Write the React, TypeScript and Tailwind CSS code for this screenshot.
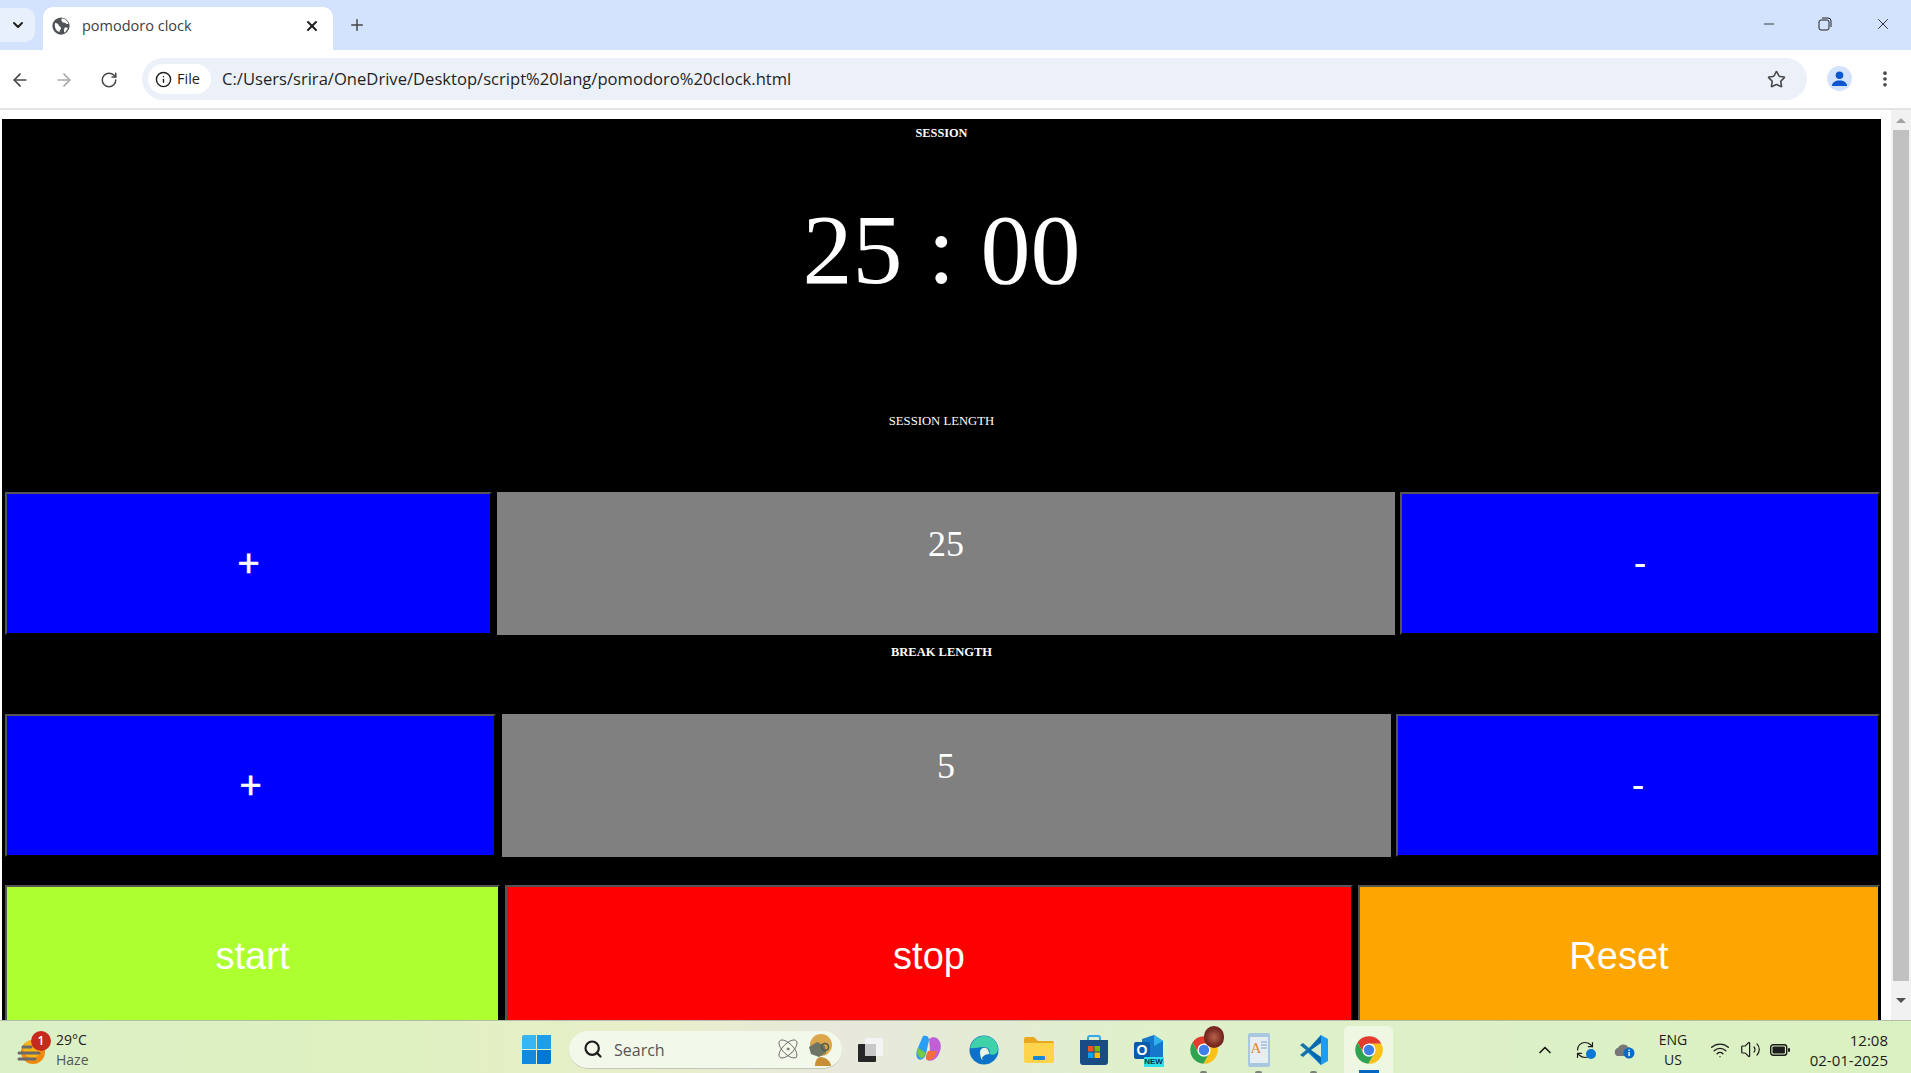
import React from "react";
import { ArrowLeft, ArrowRight, RotateCw, Star, Search, Atom, Info, Plus, X, ChevronDown, ChevronUp, Minus, RefreshCw, Wifi, Volume2, EllipsisVertical } from "lucide-react";

const SERIF = "font-['Liberation_Serif',serif]";
const SANS = "font-['Liberation_Sans',sans-serif]";
const UI = "font-['Open_Sans','Noto_Sans',sans-serif]";

const btnBorder = "border-2 border-solid border-t-[#555] border-l-[#555] border-r-black border-b-black";

function Cell({ w, bg, label, extra = "" }: { w: string; bg: string; label: string; extra?: string }) {
  return (
    <button className={`${w} ${bg} text-[38px] ${extra} ${btnBorder} h-[143px] shrink-0 text-white ${SANS} flex items-center justify-center`}>
      {label}
    </button>
  );
}

function Value({ w, v }: { w: string; v: string }) {
  return (
    <div className={`${w} h-[143px] shrink-0 bg-[#808080] text-white text-center text-[36px] leading-[41px] pt-[32px] ${SERIF}`}>{v}</div>
  );
}

function Chrome({ s = 28 }: { s?: number }) {
  return (
    <svg width={s} height={s} viewBox="0 0 48 48">
      <path d="M5.54 12.03A22 22 0 0 1 43.6 14H24A10 10 0 0 0 15.34 29Z" fill="#e33b2e" />
      <path d="M43.6 14A22 22 0 0 1 22.86 45.97L32.66 29A10 10 0 0 0 24 14Z" fill="#fbc116" />
      <path d="M22.86 45.97A22 22 0 0 1 5.54 12.03L15.34 29A10 10 0 0 0 32.66 29Z" fill="#2fa34f" />
      <circle cx="24" cy="24" r="10.5" fill="#fff" />
      <circle cx="24" cy="24" r="8.3" fill="#3f7fe8" />
    </svg>
  );
}

function Slot({ children, dot, active }: { children: React.ReactNode; dot?: boolean; active?: boolean }) {
  return (
    <div className="relative w-[55px] h-[47px] shrink-0 flex items-center justify-center">
      {active && <div className="absolute left-[3px] top-0 bottom-0 w-[49px] rounded-t-[5px] bg-[#eef7e2]" />}
      <div className="relative flex items-center justify-center">{children}</div>
      {dot && <div className="absolute left-[24px] bottom-0 w-[7px] h-[2px] rounded-t bg-[#7c8276]" />}
      {active && <div className="absolute left-[18px] bottom-0 w-[20px] h-[3px] bg-[#0067c0]" />}
    </div>
  );
}

export default function App() {
  return (
    <div className={`w-[1911px] h-[1073px] overflow-hidden flex flex-col bg-white ${UI}`}>
      {/* tab strip */}
      <div className="h-[50px] shrink-0 bg-[#d3e3fd] flex items-end">
        <div className="w-[35px] h-[34px] mb-[8px] rounded-r-[10px] bg-[#e9f0fd] flex items-center justify-center">
          <ChevronDown size={16} strokeWidth={3} className="text-[#1f1f1f]" />
        </div>
        <div className="ml-[8px] w-[290px] h-[43px] bg-white rounded-t-[10px] flex items-center pl-[9px] pb-[5px]">
          <svg width="18" height="18" viewBox="0 0 24 24">
            <circle cx="12" cy="12" r="11.5" fill="#4f5357" />
            <path d="M4 8c3 0 4 1 5 3s3 2 3 4-2 2-2 5c-4-1-7-5-6-12zM13 2c4 0 8 3 9 7-2 1-3 0-4-1s-3 0-4-1-2-3-1-5zM17 14c2 0 4 0 4 1-1 3-3 5-5 6 0-2 0-6 1-7z" fill="#fff" />
          </svg>
          <span className="ml-[12px] w-[114px] text-[14.5px] text-[#3c4043] whitespace-nowrap">pomodoro clock</span>
          <X size={16} strokeWidth={3} className="ml-[108px] text-[#1f1f1f]" />
        </div>
        <Plus size={18} strokeWidth={2} className="ml-[15px] mb-[16px] text-[#444746]" />
        <div className="flex-1" />
        <div className="flex items-center h-[50px] pb-[2px]">
          <Minus size={16} strokeWidth={1.3} className="text-[#1f1f1f]" />
          <svg width="14" height="14" viewBox="0 0 14 14" fill="none" stroke="#1f1f1f" strokeWidth="1" className="ml-[41px]">
            <rect x="1" y="3" width="10" height="10" rx="2" />
            <path d="M4 1h6a3 3 0 0 1 3 3v6" />
          </svg>
          <X size={18} strokeWidth={1.2} className="ml-[42px] mr-[19px] text-[#1f1f1f]" />
        </div>
      </div>

      {/* toolbar */}
      <div className="h-[60px] shrink-0 bg-white border-b-2 border-[#e3e3e3] flex items-center">
        <ArrowLeft size={20} strokeWidth={2} className="ml-[10px] mt-[1px] text-[#474747]" />
        <ArrowRight size={20} strokeWidth={2} className="ml-[24px] mt-[1px] text-[#a8a8a8]" />
        <RotateCw size={18} strokeWidth={2} className="ml-[26px] mt-[1px] text-[#474747]" />
        <div className="ml-[24px] w-[1665px] h-[42px] rounded-full bg-[#ecf1f9] flex items-center pl-[6px]">
          <div className="w-[63px] h-[30px] rounded-full bg-white flex items-center pl-[7px]">
            <Info size={17} strokeWidth={2} className="text-[#1f1f1f]" />
            <span className="ml-[5px] text-[14.5px] font-medium text-[#1f1f1f]">File</span>
          </div>
          <span className="ml-[11px] text-[16.6px] text-[#1f1f1f] whitespace-nowrap">C:/Users/srira/OneDrive/Desktop/script%20lang/pomodoro%20clock.html</span>
          <div className="flex-1" />
          <Star size={19} strokeWidth={2} className="mr-[21px] mt-[1px] text-[#474747]" />
        </div>
        <div className="ml-[20px] mt-[-1px] w-[25px] h-[25px] rounded-full bg-[#d3e3fd] flex items-center justify-center overflow-hidden">
          <svg width="17" height="17" viewBox="0 0 18 18" fill="#0b57d0">
            <circle cx="9" cy="5.5" r="4" />
            <path d="M1 17c0-4 3.5-6 8-6s8 2 8 6z" />
          </svg>
        </div>
        <EllipsisVertical size={20} strokeWidth={2.4} className="ml-[23px] text-[#474747]" />
      </div>

      {/* page */}
      <div className="flex-1 min-h-0 flex bg-white">
        <div className="w-[1891px] h-full overflow-hidden pt-[9px] pl-[2px] pr-[10px]">
          <div className={`bg-black text-white pb-[20px] pl-[3px] pr-[1px] ${SERIF}`}>
            <div className="h-[28px] pr-[2px] flex items-center justify-center text-[12.3px] font-bold">SESSION</div>
            <div className="h-[206px] pr-[2px] flex items-center justify-center text-[100px] leading-none">25 : 00</div>
            <div className="h-[139px] pr-[2px] pt-[60px] text-center text-[12.7px] leading-[16px]">SESSION LENGTH</div>
            <div className="flex justify-between">
              <Cell w="w-[487px]" bg="bg-[#0000ff]" label="+" extra="[-webkit-text-stroke:0.6px_white]" />
              <Value w="w-[898px]" v="25" />
              <Cell w="w-[480px]" bg="bg-[#0000ff]" label="-" />
            </div>
            <div className="h-[79px] pr-[2px] pt-[9px] text-center text-[12.5px] leading-[16px] font-bold">BREAK LENGTH</div>
            <div className="flex justify-between">
              <Cell w="w-[491px]" bg="bg-[#0000ff]" label="+" extra="[-webkit-text-stroke:0.6px_white]" />
              <Value w="w-[889px]" v="5" />
              <Cell w="w-[484px]" bg="bg-[#0000ff]" label="-" />
            </div>
            <div className="h-[28px]" />
            <div className="flex justify-between">
              <Cell w="w-[495px]" bg="bg-[#adff2f]" label="start" />
              <Cell w="w-[848px]" bg="bg-[#ff0000]" label="stop" />
              <Cell w="w-[522px]" bg="bg-[#ffa500]" label="Reset" />
            </div>
          </div>
        </div>
        <div className="w-[20px] h-full bg-[#f1f1f1] flex flex-col items-center">
          <div className="h-[20px] flex items-center justify-center">
            <div className="w-0 h-0 border-x-[5px] border-x-transparent border-b-[5px] border-b-[#a3a3a3]" />
          </div>
          <div className="w-[16px] h-[851px] bg-[#c1c1c1]" />
          <div className="flex-1 flex items-center justify-center">
            <div className="w-0 h-0 border-x-[5px] border-x-transparent border-t-[5px] border-t-[#505050]" />
          </div>
        </div>
      </div>

      {/* taskbar */}
      <div className="h-[53px] shrink-0 pt-[5px] border-t border-[#b4bcaa] bg-[linear-gradient(90deg,#dbf0c6_0%,#dff1c0_20%,#e8eecb_35%,#e8e8dc_44%,#dff0cb_60%,#daf1c1_100%)] flex items-center">
        <div className="w-[510px] pl-[17px] flex items-center shrink-0">
          <div className="relative w-[30px] h-[32px]">
            <svg width="30" height="32" viewBox="0 0 30 32">
              <circle cx="16" cy="18" r="12" fill="#f08a0c" />
              <circle cx="15" cy="15" r="9" fill="#f7b518" />
              <g stroke="#6b6b6b" strokeWidth="3" strokeLinecap="round">
                <path d="M6 13h8M2 19h20M2 25h16" />
              </g>
            </svg>
            <div className="absolute left-[14px] -top-[3px] w-[20px] h-[20px] rounded-full bg-[#c42b1c] text-white text-[12px] leading-[20px] text-center font-semibold">1</div>
          </div>
          <div className="ml-[9px] text-[14px] leading-[20px] text-[#1c1c1c]">
            <div>29°C</div>
            <div className="text-[#555]">Haze</div>
          </div>
        </div>
        <div className="w-[53px] mr-[6px] shrink-0 flex justify-center">
          <div className="grid grid-cols-2 gap-[1px] w-[29px] h-[29px]">
            <div className="bg-[#35b6f2] rounded-tl-[2px]" />
            <div className="bg-[#1c9ee8]" />
            <div className="bg-[#1589db]" />
            <div className="bg-[#0078d4] rounded-br-[2px]" />
          </div>
        </div>
        <div className="w-[273px] h-[38px] shrink-0 rounded-full bg-[#f3f9ea] border-b border-[#c3c9ba] flex items-center pl-[14px]">
          <Search size={20} strokeWidth={2.6} className="text-[#1c1c1c]" />
          <span className="ml-[11px] mt-[1px] text-[16px] text-[#555]">Search</span>
          <div className="flex-1" />
          <Atom size={24} strokeWidth={1} className="text-[#666]" />
          <svg width="26" height="34" viewBox="0 0 26 34" className="ml-[7px] mr-[9px]">
            <path d="M8 34c0-5 2-9 6-9s10 4 10 9z" fill="#c98f36" />
            <circle cx="14" cy="13" r="11" fill="#dba64c" />
            <path d="M2 15l8-5 8 4 1 7-7 4-8-3z" fill="#6f7565" />
            <circle cx="18" cy="15" r="3.5" fill="none" stroke="#4d5a44" strokeWidth="1.5" />
          </svg>
        </div>
        <Slot>
          <svg width="26" height="26" viewBox="0 0 26 26">
            <rect x="8" y="1" width="18" height="18" rx="1" fill="#f4f4f4" />
            <rect x="1" y="7" width="18" height="18" rx="1" fill="#262626" />
            <rect x="8" y="7" width="11" height="12" fill="#c8c8c8" />
          </svg>
        </Slot>
        <div className="w-[4px] shrink-0" />
        <Slot>
          <svg width="30" height="32" viewBox="0 0 30 32">
            <path d="M9 2c3-1 6 0 6 4l-3 14c-1 4-5 7-8 5-2-2-2-5-1-9z" fill="#2a9df4" />
            <path d="M4 14c-1 4 0 9 3 10 2 0 4-2 5-5z" fill="#7ac943" />
            <path d="M15 5c4-3 9-2 11 3 2 5 0 11-3 15-2 3-7 5-10 3l3-11z" fill="#c05fd6" />
            <path d="M14 17h9c-1 5-5 10-10 9-2-1-1-5 1-9z" fill="#f56d3c" />
          </svg>
        </Slot>
        <Slot>
          <svg width="30" height="30" viewBox="0 0 30 30">
            <circle cx="15" cy="15" r="14.5" fill="#0c73c9" />
            <path d="M1 13C3 5 9 1 15 1c8 0 14 6 14 13 0 5-5 7-9 5 2-3 0-7-5-7-6 0-10 2-14 1z" fill="#3fd2a8" />
            <path d="M11 17c0-3 3-5 6-4 3 1 3 5 3 6-3 0-9 3-6 6-2 0-3-5-3-8z" fill="#eaf6e0" />
          </svg>
        </Slot>
        <Slot>
          <svg width="30" height="26" viewBox="0 0 30 26">
            <path d="M0 2a2 2 0 0 1 2-2h8l4 4h14a2 2 0 0 1 2 2v4H0z" fill="#e8a820" />
            <path d="M0 6h30v18a2 2 0 0 1-2 2H2a2 2 0 0 1-2-2z" fill="#ffd44d" />
            <rect x="9" y="19" width="12" height="4" rx="1" fill="#1a86d4" />
          </svg>
        </Slot>
        <Slot>
          <svg width="30" height="32" viewBox="0 0 30 32">
            <path d="M9 6V4a2 2 0 0 1 2-2h8a2 2 0 0 1 2 2v2" fill="none" stroke="#36a7e8" strokeWidth="2" />
            <path d="M1 6h28v22a3 3 0 0 1-3 3H4a3 3 0 0 1-3-3z" fill="#194b85" />
            <rect x="9" y="12" width="5.5" height="5.5" fill="#f25022" />
            <rect x="15.5" y="12" width="5.5" height="5.5" fill="#7fba00" />
            <rect x="9" y="18.5" width="5.5" height="5.5" fill="#00a4ef" />
            <rect x="15.5" y="18.5" width="5.5" height="5.5" fill="#ffb900" />
          </svg>
        </Slot>
        <Slot>
          <div className="relative w-[30px] h-[34px]">
            <svg width="30" height="34" viewBox="0 0 30 34">
              <path d="M8 6l12-4 9 6v16H8z" fill="#1578c8" />
              <path d="M20 2l9 6-9 5z" fill="#2fb1ec" />
              <rect x="0" y="9" width="16" height="17" rx="2" fill="#0a5cab" />
              <text x="8" y="22" textAnchor="middle" fontSize="14" fontWeight="700" fill="#fff" fontFamily="Liberation Sans">O</text>
            </svg>
            <div className="absolute left-[10px] top-[24px] w-[20px] h-[10px] bg-[#2ee0e8] rounded-[1px] text-[8px] leading-[10px] text-center font-bold text-[#0a3050] font-['Liberation_Sans']">NEW</div>
          </div>
        </Slot>
        <Slot dot>
          <div className="relative">
            <Chrome s={30} />
            <div className="absolute left-[15px] -top-[9px] w-[20px] h-[22px] rounded-full bg-[radial-gradient(circle,#b5654a_0%,#7c2a22_55%,#5b1f1c_100%)]" />
          </div>
        </Slot>
        <Slot dot>
          <svg width="26" height="34" viewBox="0 0 26 34">
            <rect x="2" y="0" width="22" height="34" rx="2" fill="#a9c7de" />
            <rect x="4" y="4" width="18" height="26" fill="#e7eef3" />
            <text x="10" y="20" textAnchor="middle" fontSize="15" fill="#e8852a" fontFamily="Liberation Serif">A</text>
            <path d="M15 9h6M15 12h6M15 15h6" stroke="#7ba6c8" strokeWidth="1" />
          </svg>
        </Slot>
        <Slot dot>
          <svg width="30" height="32" viewBox="0 0 30 32">
            <path d="M22 1l7 4v22l-7 4L8 18z" fill="#1f9cf0" />
            <path d="M22 1L10 14 4 9 1 11l6 5-6 5 3 2 6-5 12 13V1z" fill="#0065a9" opacity="0.9" />
            <path d="M22 9v14l-10-7z" fill="#d9ecc9" />
          </svg>
        </Slot>
        <Slot active>
          <Chrome s={30} />
        </Slot>
        <div className="w-[129px] shrink-0" />
        <div className="w-[40px] shrink-0 flex justify-center">
          <ChevronUp size={20} strokeWidth={2} className="text-[#1c1c1c]" />
        </div>
        <div className="relative w-[40px] shrink-0 flex justify-center">
          <RefreshCw size={20} strokeWidth={1.4} className="text-[#1c1c1c]" />
          <div className="absolute left-[21px] top-[9px] w-[10px] h-[10px] rounded-full bg-[#0a78d7]" />
        </div>
        <div className="w-[40px] shrink-0 flex justify-center">
          <svg width="22" height="18" viewBox="0 0 22 18">
            <path d="M3 15C-1 13 1 7 4 7c1-4 8-5 10-1 2 0 3 2 3 4v5z" fill="#777" />
            <circle cx="15" cy="12" r="5.5" fill="#0a6cc4" />
            <rect x="14.4" y="11" width="1.4" height="4" fill="#fff" />
            <rect x="14.4" y="8.6" width="1.4" height="1.4" fill="#fff" />
          </svg>
        </div>
        <div className="w-[56px] shrink-0 text-center text-[14px] leading-[20px] text-[#1c1c1c]">
          <div>ENG</div>
          <div>US</div>
        </div>
        <div className="w-[4px] shrink-0" />
        <div className="w-[30px] shrink-0 flex justify-center">
          <Wifi size={20} strokeWidth={1.6} className="text-[#1c1c1c]" />
        </div>
        <div className="w-[30px] shrink-0 flex justify-center">
          <Volume2 size={21} strokeWidth={1.4} className="text-[#1c1c1c]" />
        </div>
        <div className="w-[30px] shrink-0 flex justify-center">
          <svg width="20" height="12" viewBox="0 0 20 12">
            <rect x="0.7" y="0.7" width="16" height="10.6" rx="2.5" fill="none" stroke="#1c1c1c" strokeWidth="1.4" />
            <rect x="2.5" y="2.5" width="12.4" height="7" rx="1" fill="#1c1c1c" />
            <rect x="18" y="4" width="2" height="4" rx="1" fill="#1c1c1c" />
          </svg>
        </div>
        <div className="flex-1 text-right pr-[23px] text-[15px] leading-[20px] text-[#1c1c1c]">
          <div>12:08</div>
          <div>02-01-2025</div>
        </div>
      </div>
    </div>
  );
}
